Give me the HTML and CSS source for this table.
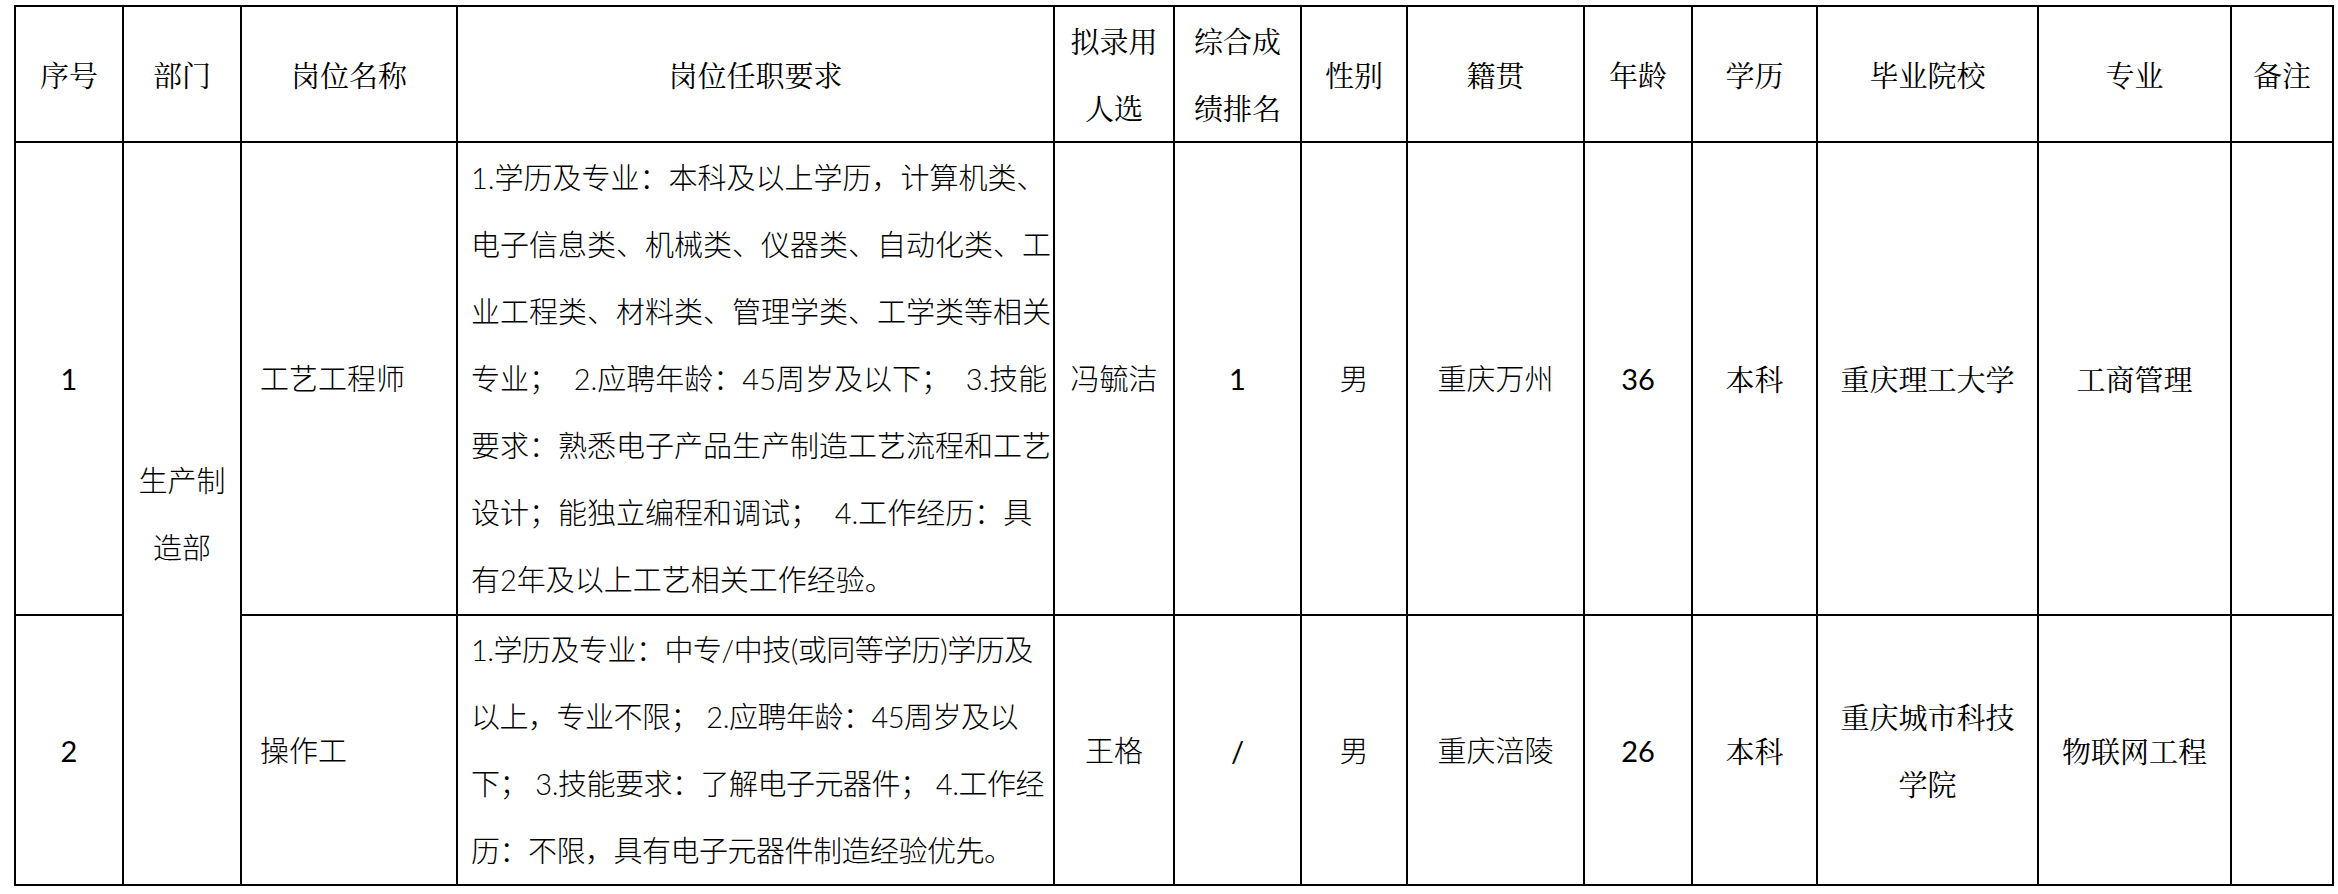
FILE: index.html
```html
<!DOCTYPE html>
<html lang="zh-CN">
<head>
<meta charset="utf-8">
<title>拟录用人选名单</title>
<link rel="stylesheet" href="styles.css">
</head>
<body>
<table class="roster">
  <colgroup>
    <col class="c-no"><col class="c-dept"><col class="c-post"><col class="c-req"><col class="c-name"><col class="c-rank"><col class="c-sex"><col class="c-home"><col class="c-age"><col class="c-edu"><col class="c-school"><col class="c-major"><col class="c-note">
  </colgroup>
  <thead>
    <tr class="head">
      <th>序号</th>
      <th>部门</th>
      <th>岗位名称</th>
      <th>岗位任职要求</th>
      <th>拟录用<br>人选</th>
      <th>综合成<br>绩排名</th>
      <th>性别</th>
      <th>籍贯</th>
      <th>年龄</th>
      <th>学历</th>
      <th>毕业院校</th>
      <th>专业</th>
      <th>备注</th>
    </tr>
  </thead>
  <tbody>
    <tr class="row-a">
      <td class="num">1</td>
      <td class="sans dept" rowspan="2">生产制<br>造部</td>
      <td class="sans post">工艺工程师</td>
      <td class="sans req">1.学历及专业：本科及以上学历，计算机类、<br>电子信息类、机械类、仪器类、自动化类、工<br>业工程类、材料类、管理学类、工学类等相关<br>专业；&nbsp;&nbsp;2.应聘年龄：45周岁及以下；&nbsp;&nbsp;3.技能<br>要求：熟悉电子产品生产制造工艺流程和工艺<br>设计；能独立编程和调试；&nbsp;&nbsp;4.工作经历：具<br>有2年及以上工艺相关工作经验。</td>
      <td class="sans">冯毓洁</td>
      <td class="num">1</td>
      <td class="sans">男</td>
      <td class="sans">重庆万州</td>
      <td class="num">36</td>
      <td class="serif">本科</td>
      <td class="serif">重庆理工大学</td>
      <td class="serif">工商管理</td>
      <td></td>
    </tr>
    <tr class="row-b">
      <td class="num">2</td>
      <td class="sans post">操作工</td>
      <td class="sans req req-tight">1.学历及专业：中专/中技(或同等学历)学历及<br>以上，专业不限；&nbsp;2.应聘年龄：45周岁及以<br>下；&nbsp;3.技能要求：了解电子元器件；&nbsp;4.工作经<br>历：不限，具有电子元器件制造经验优先。</td>
      <td class="sans">王格</td>
      <td class="num">/</td>
      <td class="sans">男</td>
      <td class="sans">重庆涪陵</td>
      <td class="num">26</td>
      <td class="serif">本科</td>
      <td class="serif">重庆城市科技<br>学院</td>
      <td class="serif">物联网工程</td>
      <td></td>
    </tr>
  </tbody>
</table>
</body>
</html>
```

FILE: styles.css
```css
html, body {
  margin: 0;
  background: #fff;
}

body {
  padding: 5px 0 0 14px;
  color: #000;
}

.roster {
  border-collapse: collapse;
  table-layout: fixed;
  width: 2320px;
  font-size: 29px;
  line-height: 67px;
}

.roster th,
.roster td {
  border: 2px solid #000;
  padding: 0 6px;
  text-align: center;
  vertical-align: middle;
  white-space: nowrap;
}

.roster th {
  font-family: "Noto Serif CJK SC", "AR PL UMing CN", "Noto Sans CJK SC", serif;
  font-weight: normal;
}

.c-no { width: 108px; }
.c-dept { width: 118px; }
.c-post { width: 216px; }
.c-req { width: 597px; }
.c-name { width: 120px; }
.c-rank { width: 127px; }
.c-sex { width: 106px; }
.c-home { width: 177px; }
.c-age { width: 108px; }
.c-edu { width: 125px; }
.c-school { width: 221px; }
.c-major { width: 193px; }
.c-note { width: 102px; }

.head { height: 136px; }
.row-a { height: 473px; }
.row-b { height: 270px; }

.roster .sans {
  font-family: "Lato", "Noto Sans CJK SC", sans-serif;
  font-weight: 300;
}

.roster .serif {
  font-family: "Noto Serif CJK SC", "AR PL UMing CN", "Noto Sans CJK SC", serif;
}

.roster .num {
  font-family: "Lato", "Noto Sans CJK SC", sans-serif;
}

.roster .post {
  text-align: left;
  padding-left: 18px;
}

.roster .req {
  text-align: left;
  padding-left: 13px;
  padding-right: 0;
}

.roster .req-tight {
  letter-spacing: -0.5px;
}
```
